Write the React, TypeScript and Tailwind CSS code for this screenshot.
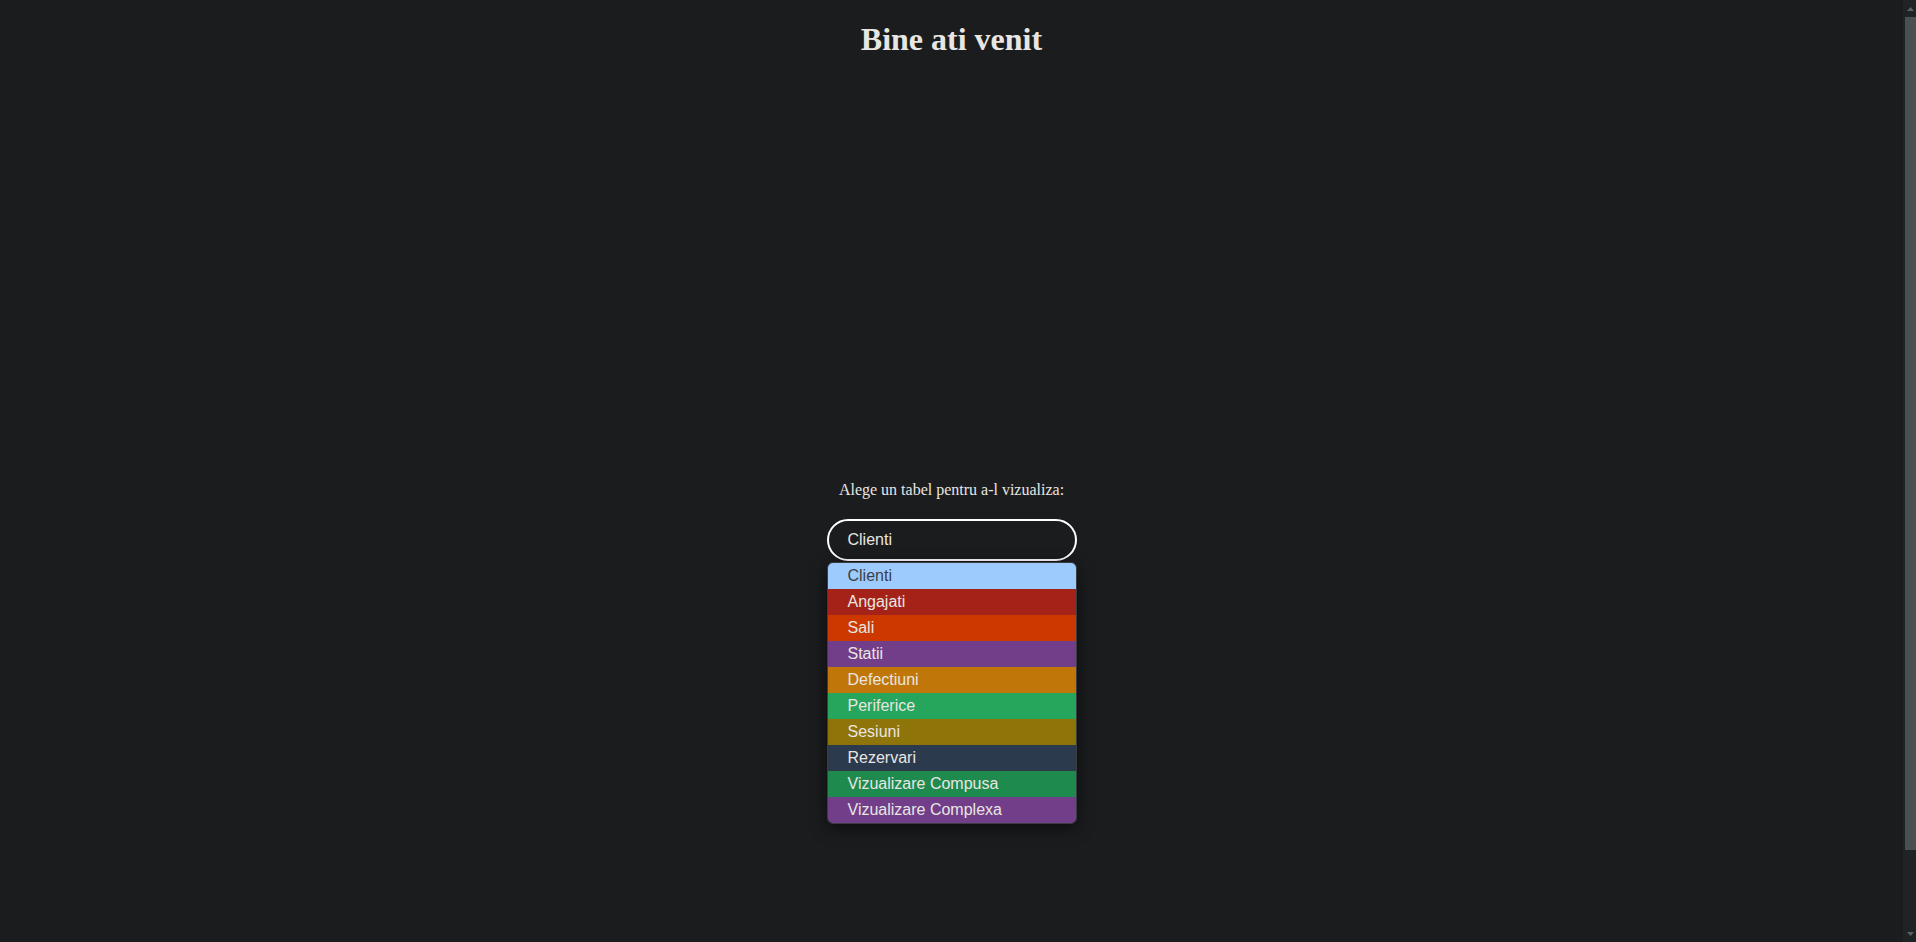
import React from 'react';

const options = [
  { label: 'Clienti', bg: 'bg-[#9dcbfd]', fg: 'text-[#3b4045]' },
  { label: 'Angajati', bg: 'bg-[#a42217]', fg: 'text-[#e8e6e3]' },
  { label: 'Sali', bg: 'bg-[#cc3800]', fg: 'text-[#e8e6e3]' },
  { label: 'Statii', bg: 'bg-[#723e89]', fg: 'text-[#e8e6e3]' },
  { label: 'Defectiuni', bg: 'bg-[#c07608]', fg: 'text-[#e8e6e3]' },
  { label: 'Periferice', bg: 'bg-[#26a55c]', fg: 'text-[#e8e6e3]' },
  { label: 'Sesiuni', bg: 'bg-[#8f740a]', fg: 'text-[#e8e6e3]' },
  { label: 'Rezervari', bg: 'bg-[#2b3a4c]', fg: 'text-[#e8e6e3]' },
  { label: 'Vizualizare Compusa', bg: 'bg-[#1f8a4d]', fg: 'text-[#e8e6e3]' },
  { label: 'Vizualizare Complexa', bg: 'bg-[#723e89]', fg: 'text-[#e8e6e3]' },
];

const Scrollbar: React.FC = () => (
  <div className="w-[13px] h-full flex flex-col bg-[#202324]">
    <div className="h-[17px] flex items-center justify-center pl-[2px]">
      <svg width="7" height="4" viewBox="0 0 7 4">
        <polygon points="3.5,0 7,4 0,4" fill="#5c6164" />
      </svg>
    </div>
    <div className="h-[833px] ml-[2px] bg-[#4a4f52]" />
    <div className="flex-1" />
    <div className="h-[17px] flex items-center justify-center pl-[2px]">
      <svg width="7" height="4" viewBox="0 0 7 4">
        <polygon points="0,0 7,0 3.5,4" fill="#5c6164" />
      </svg>
    </div>
  </div>
);

const App: React.FC = () => {
  return (
    <div className="h-[942px] flex overflow-hidden bg-[#1b1c1e]">
      <div className="flex-1 flex flex-col items-center text-[#e8e6e3] font-['Liberation_Serif','Times_New_Roman',serif]">
        <h1 className="mt-[21px] text-[32px] leading-[37px] font-bold">Bine ati venit</h1>

        <p className="mt-[423px] text-base leading-[18px]">Alege un tabel pentru a-l vizualiza:</p>

        {/* select + open list */}
        <div className="relative mt-[20px] w-[250px] font-['Liberation_Sans',Arial,sans-serif] text-base">
          <div className="h-[42px] rounded-[21px] border-2 border-white bg-[#1b1c1e] px-[19px] flex items-center">
            Clienti
          </div>
          <ul className="absolute left-0 top-[43px] w-full rounded-md border border-[#3a3e41] overflow-hidden shadow-[0_4px_16px_rgba(0,0,0,0.55)]">
            {options.map((o) => (
              <li key={o.label} className={`h-[26px] leading-[26px] pl-[20px] ${o.bg} ${o.fg}`}>
                {o.label}
              </li>
            ))}
          </ul>
        </div>
      </div>
      <Scrollbar />
    </div>
  );
};

export default App;
